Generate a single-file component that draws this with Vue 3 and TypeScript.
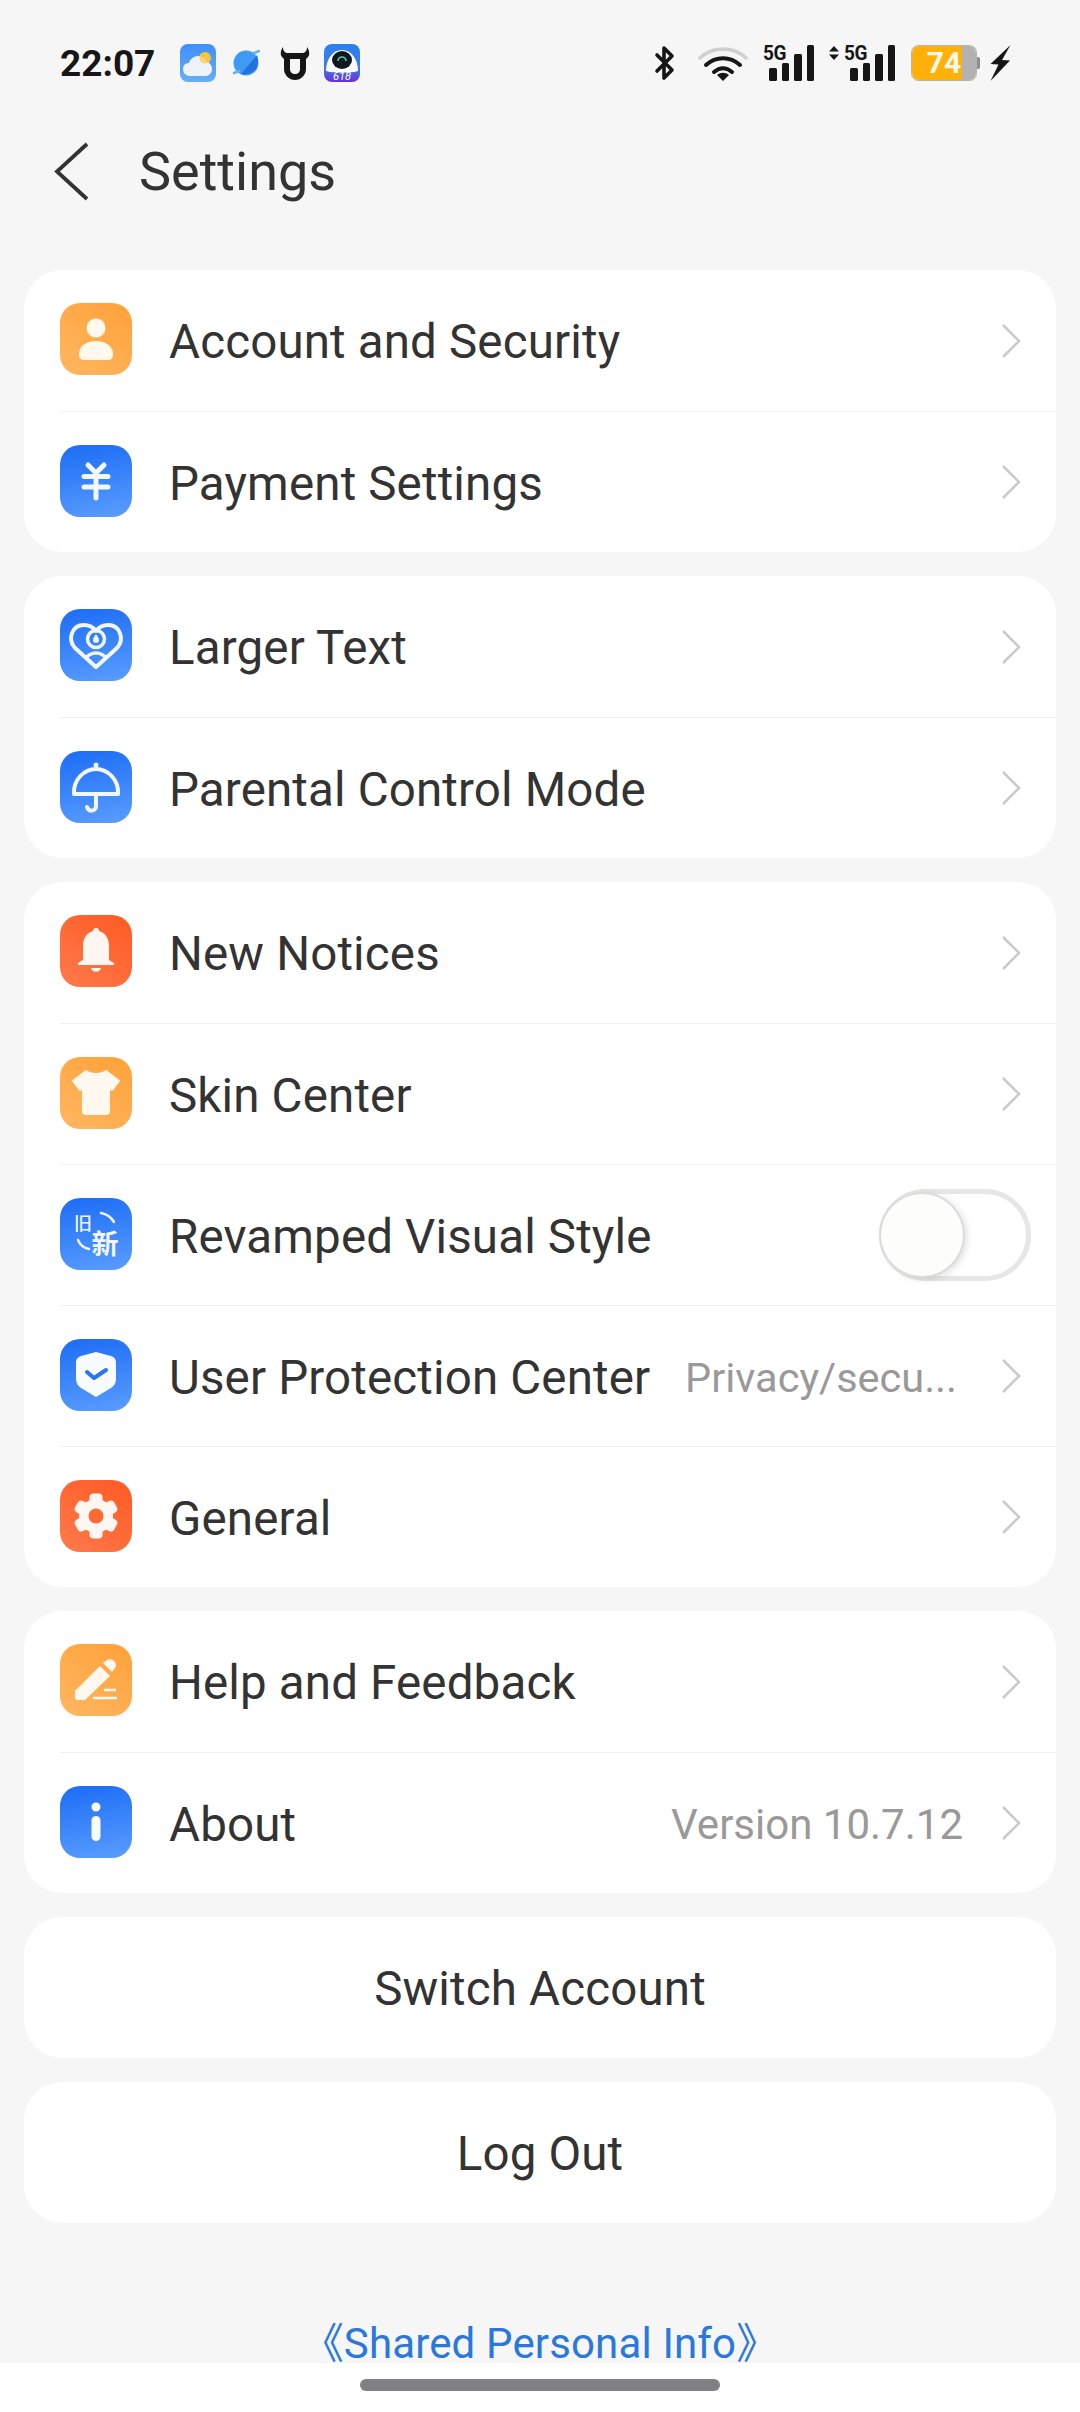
<script setup lang="ts">
type Row = {
  icon: string;
  tone: 'orange' | 'blue' | 'red';
  label: string;
  note?: string;
  clipped?: boolean;
  toggle?: boolean;
};

const groups: Row[][] = [
  [
    { icon: 'account', tone: 'orange', label: 'Account and Security' },
    { icon: 'payment', tone: 'blue', label: 'Payment Settings' },
  ],
  [
    { icon: 'heart', tone: 'blue', label: 'Larger Text' },
    { icon: 'umbrella', tone: 'blue', label: 'Parental Control Mode' },
  ],
  [
    { icon: 'bell', tone: 'red', label: 'New Notices' },
    { icon: 'shirt', tone: 'orange', label: 'Skin Center' },
    { icon: 'revamp', tone: 'blue', label: 'Revamped Visual Style', toggle: true },
    { icon: 'shield', tone: 'blue', label: 'User Protection Center', note: 'Privacy/secu...', clipped: true },
    { icon: 'gear', tone: 'red', label: 'General' },
  ],
  [
    { icon: 'pencil', tone: 'orange', label: 'Help and Feedback' },
    { icon: 'info', tone: 'blue', label: 'About', note: 'Version 10.7.12' },
  ],
];

const gearTeeth = [0, 60, 120, 180, 240, 300];
const actions = ['Switch Account', 'Log Out'];
</script>

<template>
  <div class="page">
    <div class="status">
      <span class="time">22:07</span>
      <div class="app-icons">
        <svg class="app weather" width="36" height="38" viewBox="0 0 36 38">
          <defs>
            <linearGradient id="wx" x1="0" y1="0" x2="0" y2="1">
              <stop offset="0" stop-color="#3f8ff5" />
              <stop offset="1" stop-color="#68aef8" />
            </linearGradient>
          </defs>
          <rect width="36" height="38" rx="8" fill="url(#wx)" />
          <circle cx="25" cy="14" r="6" fill="#f6c445" />
          <path d="M10 32C5 32 3 28 3 25c0-4 3-6 6-6 1-4 5-7 9-7s8 3 9 6c3 1 5 4 5 7 0 4-3 7-6 7z" fill="#eef3f8" />
          <circle cx="25" cy="14" r="5.500" fill="#f6c445" opacity=".7" />
        </svg>
        <svg class="app globe" width="28" height="32" viewBox="0 0 28 32">
          <circle cx="14" cy="16" r="12.500" fill="#3e9bf2" />
          <path d="M25 8c2 6 1 12-3 16-4 3-9 4-13 3z" fill="#2472e0" />
          <path d="M2 26l5-2M22 6l5-2" stroke="#64b1f6" stroke-width="2.500" stroke-linecap="round" />
        </svg>
        <svg class="app bull" width="32" height="34" viewBox="0 0 32 34">
          <path d="M4 1c0 4 2 6 5 6h14c3 0 5-2 5-6 3 4 3 9 0 11l-1 1v10c0 6-5 11-11 11S5 29 5 23V13l-1-1C1 10 1 5 4 1z" fill="#161616" />
          <path d="M11 13h10v10c0 3-2 5-5 5s-5-2-5-5z" fill="#f6f6f7" />
        </svg>
        <svg class="app robot" width="36" height="38" viewBox="0 0 36 38">
          <defs>
            <linearGradient id="rb" x1="0" y1="0" x2="0" y2="1">
              <stop offset="0" stop-color="#2b80ee" />
              <stop offset=".6" stop-color="#3f7fe8" />
              <stop offset="1" stop-color="#6a2fd8" />
            </linearGradient>
          </defs>
          <rect width="36" height="38" rx="8" fill="url(#rb)" />
          <path d="M2 27c0-12 7-21 16-21s16 9 16 21c-5 2-27 2-32 0z" fill="#fff" />
          <ellipse cx="18" cy="16" rx="10" ry="9" fill="#10171f" />
          <path d="M14 17a4 4 0 0 1 8 0" fill="none" stroke="#4fd0b8" stroke-width="1.600" />
          <text class="robot-num" x="18" y="36" text-anchor="middle">618</text>
        </svg>
      </div>
      <div class="sys-icons">
        <svg width="22" height="36" viewBox="0 0 22 36" class="bt">
          <path d="M3 10l15 15-8 8V3l8 8L3 26" fill="none" stroke="#161616" stroke-width="3.600" stroke-linejoin="round" stroke-linecap="round" />
        </svg>
        <svg width="50" height="36" viewBox="0 0 50 36" class="wifi">
          <path d="M2 13C15 1 35 1 48 13" fill="none" stroke="#cfcfcf" stroke-width="3.500" stroke-linecap="round" />
          <path d="M8 20c10-9 24-9 34 0M16 27c6-5 12-5 18 0" fill="none" stroke="#161616" stroke-width="4" stroke-linecap="round" />
          <path d="M19 30c4-3 8-3 12 0l-6 6z" fill="#161616" />
        </svg>
        <div class="signal first">
          <span class="net">5G</span>
          <i class="bar b1"></i><i class="bar b2"></i><i class="bar b3"></i><i class="bar b4"></i>
        </div>
        <div class="signal second">
          <svg class="updown" width="10" height="14" viewBox="0 0 10 14">
            <path d="M5 0l5 5.500H0zM5 14L0 8.500h10z" fill="#161616" />
          </svg>
          <span class="net">5G</span>
          <i class="bar b1"></i><i class="bar b2"></i><i class="bar b3"></i><i class="bar b4"></i>
        </div>
        <div class="battery">
          <span class="level">74</span>
          <i class="nub"></i>
        </div>
        <svg class="bolt" width="21" height="36" viewBox="0 0 21 36">
          <path d="M20.500 0L.5 19l8 .5L.5 36 20 15.500l-8-.5z" fill="#161616" />
        </svg>
      </div>
    </div>

    <header class="title-bar">
      <svg class="back" width="35" height="59" viewBox="0 0 35 59">
        <path d="M33 2L3 29.500 33 57" fill="none" stroke="#333" stroke-width="3.800" />
      </svg>
      <h1>Settings</h1>
    </header>

    <main class="groups">
      <section v-for="(group, g) in groups" :key="g" class="card">
        <div v-for="row in group" :key="row.label" class="row">
          <div class="icon" :class="row.tone">
            <svg width="72" height="72" viewBox="0 0 72 72">
              <template v-if="row.icon === 'account'">
                <circle cx="36" cy="25" r="9.500" fill="#fff8ee" />
                <path d="M19 51c0-8 8-13 17-13s17 5 17 13c0 4-2 6-5 6H24c-3 0-5-2-5-6z" fill="#fff8ee" />
              </template>
              <template v-else-if="row.icon === 'payment'">
                <path d="M28 20l8 8 8-8M24 31.500h24M24 42h24M36 28v25" fill="none" stroke="#f2f7ff" stroke-width="5" stroke-linecap="round" stroke-linejoin="round" />
              </template>
              <template v-else-if="row.icon === 'heart'">
                <path d="M36 58L15 39C7 30 12 16 24 16c5 0 9 2 12 6 3-4 7-6 12-6 12 0 17 14 9 23z" fill="none" stroke="#f2f7ff" stroke-width="4" stroke-linejoin="round" />
                <circle cx="36" cy="30" r="8.500" fill="none" stroke="#f2f7ff" stroke-width="3.500" />
                <path d="M36 25c2 3 3 4 3 6a3 3 0 0 1-6 0c0-2 1-3 3-6z" fill="#f2f7ff" />
                <path d="M25 50c6-8 16-8 22 0" fill="none" stroke="#f2f7ff" stroke-width="3.500" />
              </template>
              <template v-else-if="row.icon === 'umbrella'">
                <circle cx="36" cy="14" r="2.500" fill="#f2f7ff" />
                <path d="M14 43c-1-14 10-25 22-25s23 11 22 25z" fill="none" stroke="#f2f7ff" stroke-width="4" stroke-linejoin="round" />
                <path d="M36 43v12c0 6-8 6-9 1" fill="none" stroke="#f2f7ff" stroke-width="4" stroke-linecap="round" />
              </template>
              <template v-else-if="row.icon === 'bell'">
                <path d="M33 16a3 3 0 0 1 6 0c7 2 10 8 10 15v14l5 3v2H18v-2l5-3V31c0-7 3-13 10-15z" fill="#fff6f1" />
                <path d="M31 53h10c-1 5-9 5-10 0z" fill="#fff6f1" />
              </template>
              <template v-else-if="row.icon === 'shirt'">
                <path d="M26 14c5 4 15 4 20 0l13 10-7 9-3-2v23c0 2-1 3-3 3H26c-2 0-3-1-3-3V31l-3 2-7-9z" fill="#fff8ee" stroke="#fff8ee" stroke-width="2" stroke-linejoin="round" />
              </template>
              <template v-else-if="row.icon === 'revamp'">
                <text class="han small" x="23" y="32" text-anchor="middle">旧</text>
                <text class="han big" x="45" y="56" text-anchor="middle">新</text>
                <path d="M41 15c6 1 10 4 13 9M18 42c2 5 6 8 11 9" fill="none" stroke="#f2f7ff" stroke-width="2.500" stroke-linecap="round" />
              </template>
              <template v-else-if="row.icon === 'shield'">
                <path d="M36 13l15 4c3 1 5 3 5 6v17c0 4-2 7-5 9l-15 9-15-9c-3-2-5-5-5-9V23c0-3 2-5 5-6z" fill="#f8fbff" />
                <path d="M27 33l7 6 12-8" fill="none" stroke="#2a74f0" stroke-width="4" stroke-linecap="round" stroke-linejoin="round" />
              </template>
              <template v-else-if="row.icon === 'gear'">
                <rect v-for="a in gearTeeth" :key="a" x="29.500" y="13.500" width="13" height="12" rx="4" fill="#fff6f1" :transform="`rotate(${a} 36 36)`" />
                <circle cx="36" cy="36" r="17" fill="#fff6f1" />
                <circle cx="36" cy="36" r="7.500" fill="#ff6a35" />
              </template>
              <template v-else-if="row.icon === 'pencil'">
                <path d="M15 47l25-25 10 10-25 24H17c-1 0-2-1-2-2z" fill="#fff8ee" />
                <path d="M43 19l4-3c2-1 5-1 7 1s3 5 1 7l-3 4z" fill="#fff8ee" />
                <path d="M44 46h12M33 54h24" stroke="#fff8ee" stroke-width="2.500" />
              </template>
              <template v-else-if="row.icon === 'info'">
                <circle cx="36" cy="21" r="4.500" fill="#f8fbff" />
                <rect x="31.500" y="30" width="9" height="25" rx="4.500" fill="#f8fbff" />
              </template>
            </svg>
          </div>
          <span class="label">{{ row.label }}</span>
          <span v-if="row.note" class="note" :class="{ clipped: row.clipped }">{{ row.note }}</span>
          <div v-if="row.toggle" class="toggle"><i class="knob"></i></div>
          <svg v-else class="chev" width="20" height="36" viewBox="0 0 20 36">
            <path d="M2 2l16 16L2 34" fill="none" stroke="#cacaca" stroke-width="2.600" />
          </svg>
        </div>
      </section>

      <button v-for="a in actions" :key="a" class="card action" type="button">{{ a }}</button>
    </main>

    <a class="shared">《Shared Personal Info》</a>
    <div class="nav"><i class="handle"></i></div>
  </div>
</template>

<style scoped>
.page {
  width: 1080px;
  height: 2412px;
  background: #f6f6f7;
  display: flex;
  flex-direction: column;
  overflow: hidden;
  font-family: Roboto, "Noto Sans CJK SC", sans-serif;
  color: #333;
}
.status {
  height: 126px;
  flex: none;
  display: flex;
  align-items: center;
  padding: 0 69px 0 60px;
  box-sizing: border-box;
}
.time {
  font-size: 37px;
  font-weight: 700;
  color: #161616;
  width: 120px;
}
.app-icons {
  display: flex;
  align-items: center;
}
.weather { margin-right: 16px; }
.globe { margin-right: 19px; }
.bull { margin-right: 13px; }
.robot-num {
  font-family: Roboto, sans-serif;
  font-size: 11px;
  font-style: italic;
  fill: #fff;
}
.sys-icons {
  margin-left: auto;
  display: flex;
  align-items: center;
}
.bt { margin-right: 22px; }
.wifi { margin-right: 15px; }
.signal {
  height: 36px;
  display: flex;
  align-items: flex-end;
  gap: 5px;
  position: relative;
  padding-left: 6px;
  box-sizing: border-box;
}
.signal.first { width: 52px; margin-right: 14px; }
.signal.second { width: 67px; padding-left: 21px; margin-right: 16px; }
.net {
  position: absolute;
  top: -3px;
  left: 0;
  font-size: 20px;
  line-height: 22px;
  font-weight: 700;
  color: #161616;
  letter-spacing: -.5px;
  transform: scaleX(.95);
  transform-origin: left;
}
.second .net { left: 15px; }
.updown { position: absolute; left: 0; top: 1px; }
.bar {
  width: 7.500px;
  background: #161616;
  border-radius: 1.500px;
  display: block;
  flex: none;
}
.b1 { height: 13px; }
.b2 { height: 18px; }
.b3 { height: 27px; }
.b4 { height: 36px; }
.battery {
  width: 64px;
  height: 34px;
  border-radius: 7px;
  background: linear-gradient(90deg, #ffb10a 0 78%, #b2b2b2 78%);
  box-shadow: 0 0 0 1px rgba(110, 100, 70, .45);
  position: relative;
  display: flex;
  align-items: center;
  justify-content: center;
  margin-right: 14px;
}
.level {
  font-size: 30px;
  font-weight: 700;
  color: #fff8e8;
  line-height: 34px;
}
.nub {
  position: absolute;
  right: -4px;
  top: 11px;
  width: 3px;
  height: 12px;
  border-radius: 0 2px 2px 0;
  background: #8e8e8e;
}
.title-bar {
  height: 90px;
  flex: none;
  display: flex;
  align-items: center;
  padding-left: 54px;
  margin-bottom: 54px;
}
.back { margin-right: 50px; }
h1 {
  margin: 0;
  font-size: 54px;
  font-weight: 400;
  color: #333;
}
.groups {
  display: flex;
  flex-direction: column;
  gap: 24px;
  padding: 0 24px;
}
.card {
  background: #fff;
  border-radius: 38px;
  overflow: hidden;
}
.row {
  height: 141px;
  margin-left: 36px;
  padding-right: 35px;
  box-sizing: border-box;
  display: flex;
  align-items: center;
}
.row + .row { border-top: 1.500px solid #f0f1f2; }
.icon {
  width: 72px;
  height: 72px;
  border-radius: 20px;
  flex: none;
  margin: 0 37px 3px 0;
}
.icon svg { display: block; }
.orange { background: linear-gradient(215deg, #ffa139, #ffb761); }
.blue { background: linear-gradient(170deg, #1c6df5, #5a9dff); }
.red { background: linear-gradient(215deg, #ff5a22, #ff7a4b); }
.han {
  font-family: "Noto Sans CJK SC", sans-serif;
  fill: #f2f7ff;
}
.han.small { font-size: 18px; font-weight: 500; }
.han.big { font-size: 27px; font-weight: 700; }
.label {
  font-size: 47.500px;
  letter-spacing: .15px;
  color: #333;
  white-space: nowrap;
  padding-top: 3px;
}
.note {
  margin-left: auto;
  margin-right: 38px;
  font-size: 42px;
  color: #999;
  white-space: nowrap;
  padding-top: 3px;
}
.note.clipped { margin-right: 44px; font-size: 41.500px; }
.chev {
  flex: none;
  margin-left: auto;
}
.note + .chev { margin-left: 0; }
.toggle {
  margin-left: auto;
  margin-right: -10px;
  width: 152px;
  height: 92px;
  border-radius: 46px;
  border: 5px solid #e6e6e6;
  box-sizing: border-box;
  position: relative;
}
.knob {
  position: absolute;
  left: -3px;
  top: 0;
  width: 82px;
  height: 82px;
  border-radius: 50%;
  background: #fdfdfb;
  box-shadow: 0 0 0 2px #dcdcdc, 3px 2px 8px rgba(0, 0, 0, .16);
}
.action {
  height: 141px;
  border: 0;
  padding: 3px 0 0;
  font: inherit;
  font-size: 47.500px;
  letter-spacing: .15px;
  color: #333;
  text-align: center;
}
.shared {
  margin-top: auto;
  height: 54px;
  line-height: 70px;
  flex: none;
  text-align: center;
  font-size: 42px;
  letter-spacing: .15px;
  color: #2a78dc;
}
.nav {
  height: 49px;
  flex: none;
  background: #fff;
  position: relative;
}
.handle {
  position: absolute;
  left: 360px;
  top: 16px;
  width: 360px;
  height: 12px;
  border-radius: 6px;
  background: #808083;
}
</style>

<style>
html, body { background: #f6f6f7; }
</style>
